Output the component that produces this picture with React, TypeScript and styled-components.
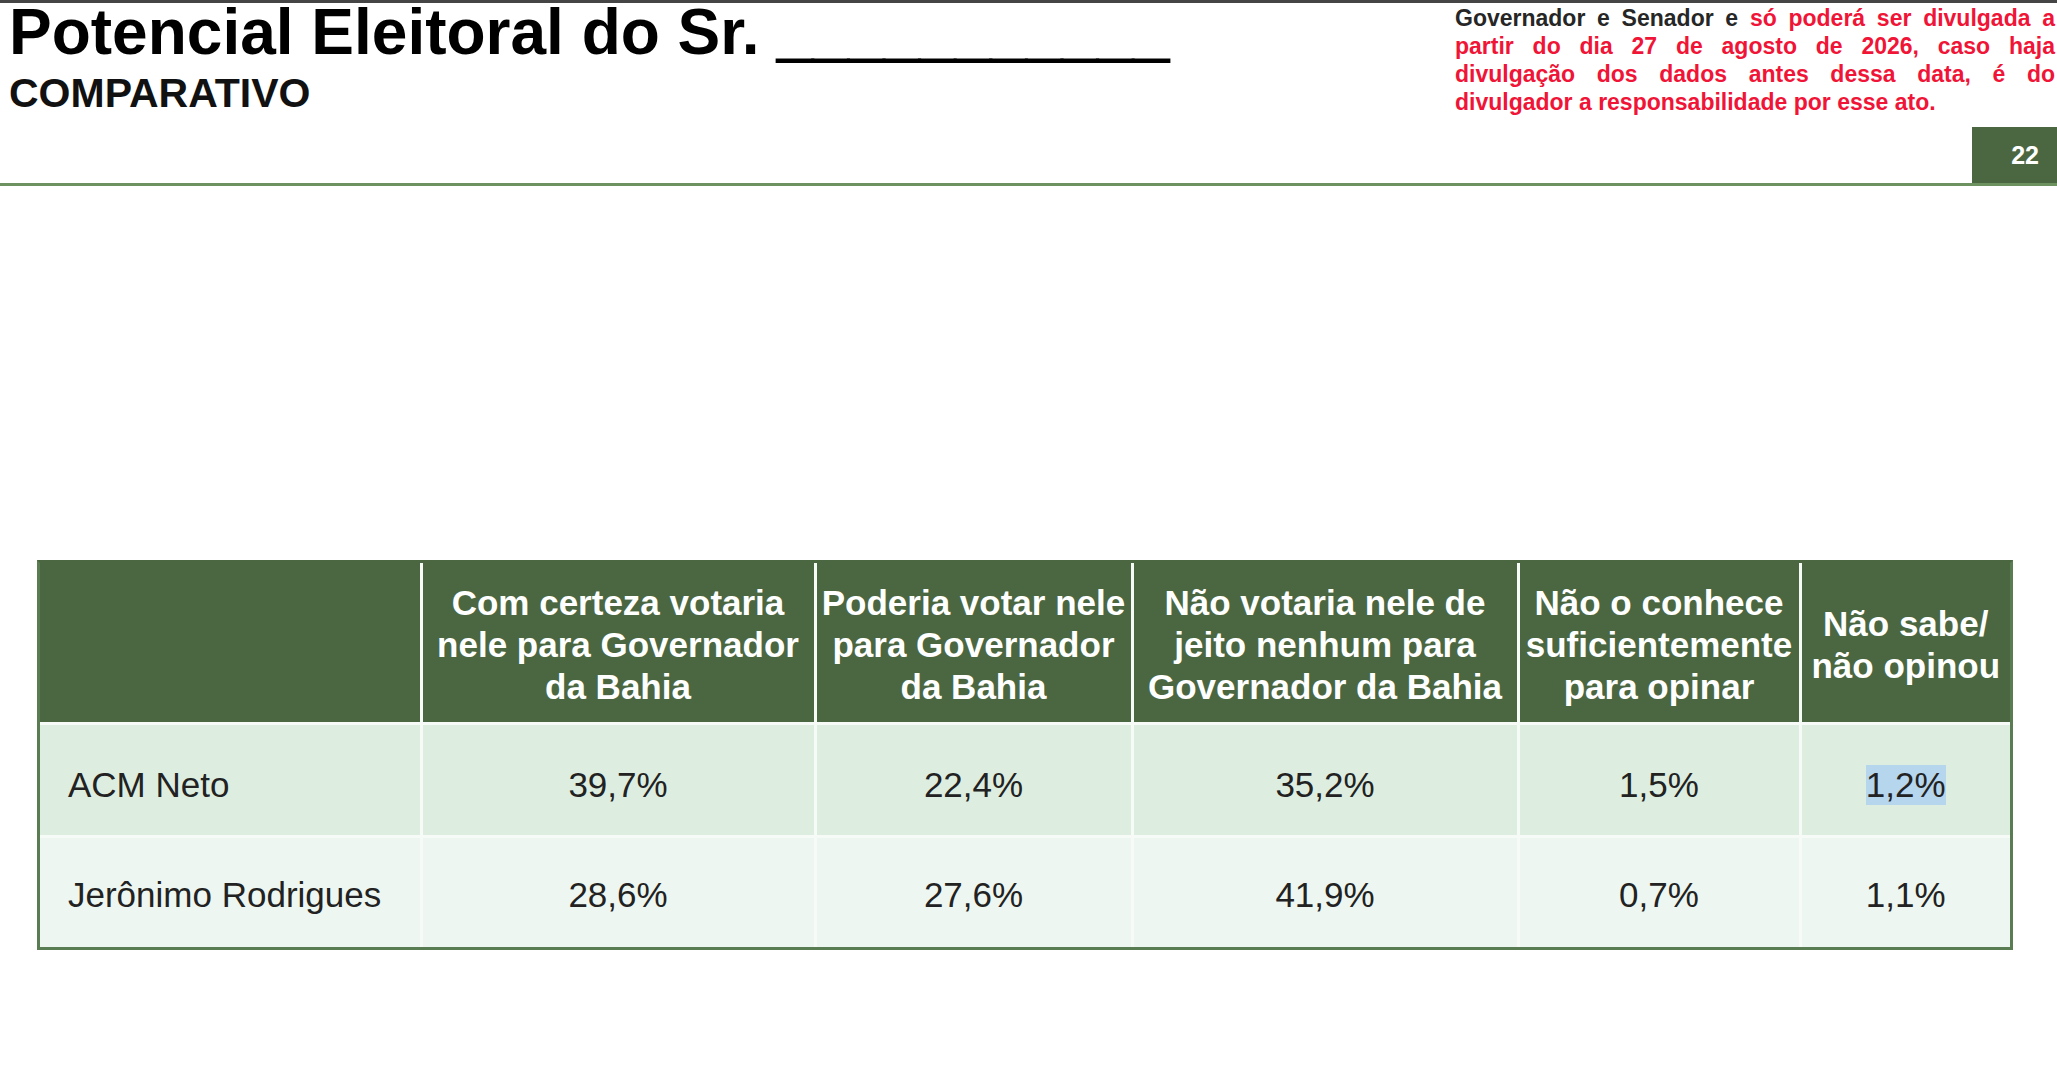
import React from "react";
import styled, { createGlobalStyle } from "styled-components";

const GlobalStyle = createGlobalStyle`
  html, body {
    margin: 0;
    padding: 0;
    background: #ffffff;
  }
  body {
    font-family: "Liberation Sans", Arial, sans-serif;
    color: #222222;
  }
`;

const green = "#4b6741";

const Page = styled.div`
  width: 2057px;
  min-height: 1080px;
  border-top: 3px solid #454545;
  box-sizing: border-box;
`;

const Header = styled.header`
  display: flex;
  justify-content: space-between;
  height: 180px;
  border-bottom: 3px solid #6e9160;
`;

const TitleBlock = styled.div`
  display: flex;
  flex-direction: column;
  padding-left: 9px;
`;

const Title = styled.h1`
  margin: 0;
  font-size: 64px;
  line-height: 58px;
  font-weight: 700;
  color: #000;
  white-space: nowrap;
`;

// the blank after "Sr." is printed thicker than the font's own underscore
const Blank = styled.span`
  -webkit-text-stroke: 2px #000;
`;

const Subtitle = styled.h2`
  margin: 9px 0 0;
  font-size: 41px;
  line-height: 46px;
  font-weight: 700;
  color: #111;
`;

const RightBlock = styled.div`
  display: flex;
  flex-direction: column;
  justify-content: space-between;
  align-items: flex-end;
`;

const Notice = styled.div`
  width: 600px;
  margin: 1px 2px 0 0;
  font-size: 23px;
  line-height: 28px;
  font-weight: 700;
  color: #f01437;
`;

const NoticeLine = styled.div<{ $last?: boolean }>`
  text-align: ${({ $last }) => ($last ? "left" : "justify")};
  text-align-last: ${({ $last }) => ($last ? "left" : "justify")};
  white-space: nowrap;
`;

const Dark = styled.span`
  color: #262626;
`;

const PageNumber = styled.div`
  width: 85px;
  height: 56px;
  box-sizing: border-box;
  padding-right: 18px;
  background: ${green};
  color: #ffffff;
  font-size: 25px;
  font-weight: 700;
  display: flex;
  align-items: center;
  justify-content: flex-end;
`;

const Main = styled.main`
  padding: 374px 44px 0 37px;
`;

const Grid = styled.div`
  display: grid;
  grid-template-columns: 379.5px 391px 314px 383px 279px 208.5px;
  grid-template-rows: 158.5px 110px 109.5px;
  gap: 3px;
  background: #f7fbf8;
  border: 3px solid #5a7c52;
  border-top-color: ${green};
`;

const HeadCell = styled.div`
  background: ${green};
  color: #ffffff;
  font-size: 35px;
  line-height: 42px;
  font-weight: 700;
  text-align: center;
  white-space: nowrap;
  display: flex;
  align-items: center;
  justify-content: center;
  padding-top: 6px;
  box-sizing: border-box;
`;

const Cell = styled.div<{ $shade: "dark" | "light"; $name?: boolean }>`
  background: ${({ $shade }) => ($shade === "dark" ? "#ddeee1" : "#edf6f0")};
  color: #222222;
  font-size: 35px;
  display: flex;
  align-items: center;
  justify-content: ${({ $name }) => ($name ? "flex-start" : "center")};
  padding: ${({ $shade }) => ($shade === "dark" ? "10px" : "6px")} 0 0
    ${({ $name }) => ($name ? "28px" : "0")};
  box-sizing: border-box;
  white-space: nowrap;
`;

const Selected = styled.span`
  background: #b6d6ee;
`;

const headers: string[][] = [
  [],
  ["Com certeza votaria", "nele para Governador", "da Bahia"],
  ["Poderia votar nele", "para Governador", "da Bahia"],
  ["Não votaria nele de", "jeito nenhum para", "Governador da Bahia"],
  ["Não o conhece", "suficientemente", "para opinar"],
  ["Não sabe/", "não opinou"],
];

const rows = [
  { name: "ACM Neto", values: ["39,7%", "22,4%", "35,2%", "1,5%", "1,2%"] },
  { name: "Jerônimo Rodrigues", values: ["28,6%", "27,6%", "41,9%", "0,7%", "1,1%"] },
];

export default function App() {
  return (
    <>
      <GlobalStyle />
      <Page>
        <Header>
          <TitleBlock>
            <Title>
              Potencial Eleitoral do Sr. <Blank>___________</Blank>
            </Title>
            <Subtitle>COMPARATIVO</Subtitle>
          </TitleBlock>
          <RightBlock>
            <Notice>
              <NoticeLine>
                <Dark>Governador e Senador e </Dark>só poderá ser divulgada a
              </NoticeLine>
              <NoticeLine>partir do dia 27 de agosto de 2026, caso haja</NoticeLine>
              <NoticeLine>divulgação dos dados antes dessa data, é do</NoticeLine>
              <NoticeLine $last>divulgador a responsabilidade por esse ato.</NoticeLine>
            </Notice>
            <PageNumber>22</PageNumber>
          </RightBlock>
        </Header>
        <Main>
          <Grid>
            {headers.map((lines, i) => (
              <HeadCell key={i}>
                <div>
                  {lines.map((l, j) => (
                    <div key={j}>{l}</div>
                  ))}
                </div>
              </HeadCell>
            ))}
            {rows.map((row, r) => (
              <React.Fragment key={row.name}>
                <Cell $shade={r === 0 ? "dark" : "light"} $name>
                  {row.name}
                </Cell>
                {row.values.map((v, c) => (
                  <Cell key={c} $shade={r === 0 ? "dark" : "light"}>
                    {r === 0 && c === 4 ? <Selected>{v}</Selected> : v}
                  </Cell>
                ))}
              </React.Fragment>
            ))}
          </Grid>
        </Main>
      </Page>
    </>
  );
}
